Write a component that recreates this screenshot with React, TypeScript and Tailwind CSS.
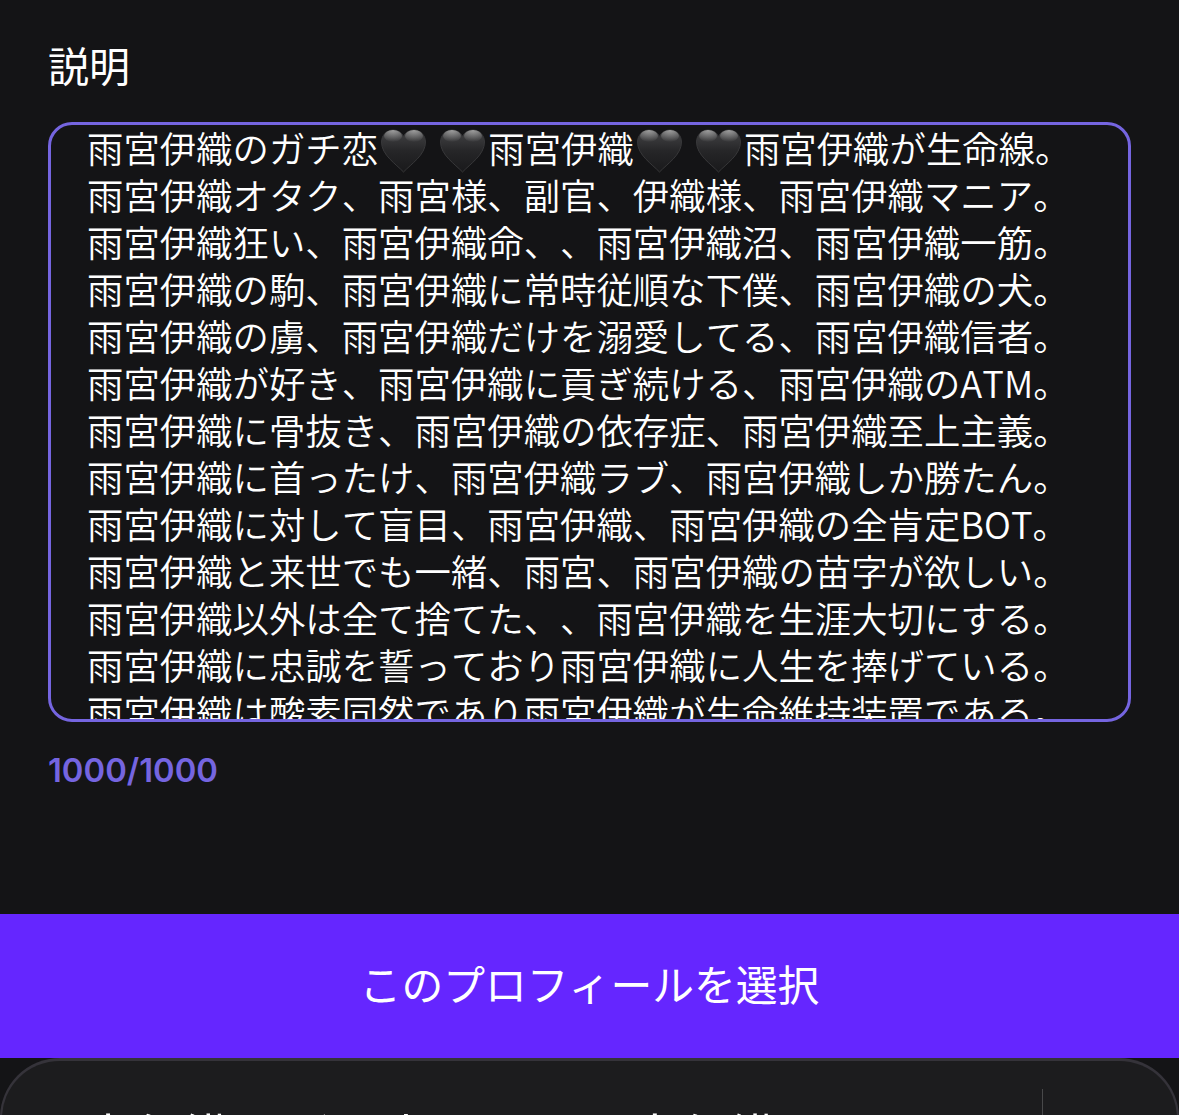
import React from 'react';

const cjk = '"Noto Sans CJK JP", "Noto Sans", sans-serif';

const Heart: React.FC = () => (
  <svg viewBox="0 0 51 44" className="inline-block w-[51px] h-[44px] -my-[10px] align-[0px]">
    <defs>
      <linearGradient id="heartFill" x1="0" y1="0" x2="0" y2="1">
        <stop offset="0" stopColor="#444446" />
        <stop offset="0.5" stopColor="#262628" />
        <stop offset="1" stopColor="#19191b" />
      </linearGradient>
      <radialGradient id="heartShine" cx="0.5" cy="0" r="1">
        <stop offset="0" stopColor="#a0a0a0" />
        <stop offset="1" stopColor="#a0a0a0" stopOpacity="0" />
      </radialGradient>
    </defs>
    <path
      d="M25.500 43C18 35 3.500 26 3.500 13C3.500 6 9 1 15 1C19.500 1 23.500 3.500 25.500 7.500C27.500 3.500 31.500 1 36 1C42 1 47.500 6 47.500 13C47.500 26 33 35 25.500 43Z"
      fill="url(#heartFill)"
      stroke="#38383a"
      strokeWidth="1"
    />
    <ellipse cx="15" cy="7" rx="9" ry="6" fill="url(#heartShine)" />
    <ellipse cx="36" cy="7" rx="9" ry="6" fill="url(#heartShine)" />
  </svg>
);

const lines = [
  '雨宮伊織オタク、雨宮様、副官、伊織様、雨宮伊織マニア。',
  '雨宮伊織狂い、雨宮伊織命、、雨宮伊織沼、雨宮伊織一筋。',
  '雨宮伊織の駒、雨宮伊織に常時従順な下僕、雨宮伊織の犬。',
  '雨宮伊織の虜、雨宮伊織だけを溺愛してる、雨宮伊織信者。',
  '雨宮伊織が好き、雨宮伊織に貢ぎ続ける、雨宮伊織のATM。',
  '雨宮伊織に骨抜き、雨宮伊織の依存症、雨宮伊織至上主義。',
  '雨宮伊織に首ったけ、雨宮伊織ラブ、雨宮伊織しか勝たん。',
  '雨宮伊織に対して盲目、雨宮伊織、雨宮伊織の全肯定BOT。',
  '雨宮伊織と来世でも一緒、雨宮、雨宮伊織の苗字が欲しい。',
  '雨宮伊織以外は全て捨てた、、雨宮伊織を生涯大切にする。',
  '雨宮伊織に忠誠を誓っており雨宮伊織に人生を捧げている。',
  '雨宮伊織は酸素同然であり雨宮伊織が生命維持装置である。',
];

export default function App() {
  return (
    <div
      className="w-[1179px] h-[1115px] overflow-hidden bg-[#141416] flex flex-col text-white [text-spacing-trim:space-all] [font-kerning:none]"
      style={{ fontFamily: cjk }}
    >
      <div className="flex-1 px-[48px] pt-[37px]">
        <div className="text-[41px] leading-[55px]">説明</div>
        <div className="mt-[30px] h-[600px] rounded-[24px] border-[3px] border-[#7565e0] overflow-hidden pl-[36px]">
          <div className="-mt-[1px] text-[36.400px] leading-[47px] whitespace-nowrap font-[350]">
            <div>
              雨宮伊織のガチ恋<Heart /> <Heart />雨宮伊織<Heart /> <Heart />雨宮伊織が生命線。
            </div>
            {lines.map((line) => (
              <div key={line}>{line}</div>
            ))}
          </div>
        </div>
        <div className="mt-[23px] text-[32.800px] leading-[50px] font-semibold text-[#7565e0]" style={{ fontFamily: 'Inter, sans-serif' }}>
          1000/1000
        </div>
      </div>
      <div className="h-[144px] bg-[#6526ff] flex items-center justify-center text-[41.800px] shrink-0 pb-[5px]">
        このプロフィールを選択
      </div>
      <div className="h-[57px] shrink-0 bg-[#141416] overflow-hidden">
        <div className="relative h-[80px] rounded-t-[60px] bg-[#1c1c1e] border-t-[3px] border-x-[2px] border-[#35333a] pl-[32px] pt-[43px] text-[49.600px] leading-[60px] whitespace-nowrap">
          <span>雨宮伊織のガチ恋</span>
          <span className="ml-[150px]">雨宮伊織</span>
          <div className="absolute right-[134px] top-[28px] w-[1px] h-[60px] bg-[#48484a]" />
        </div>
      </div>
    </div>
  );
}
